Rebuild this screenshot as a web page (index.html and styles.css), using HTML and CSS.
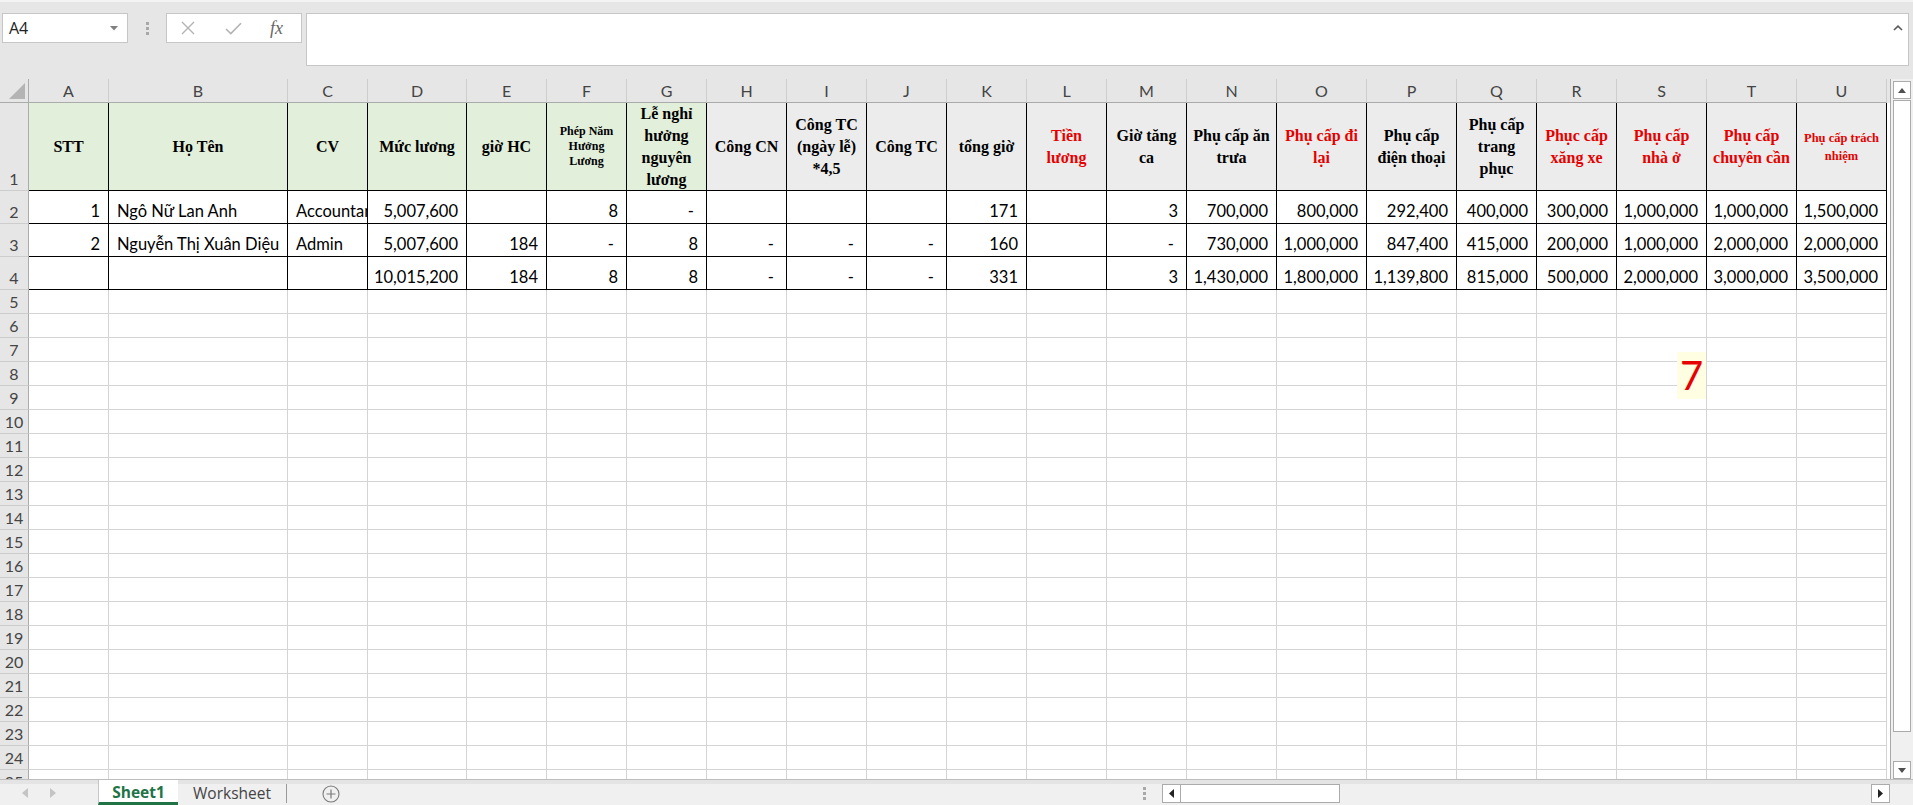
FILE: index.html
```html
<!DOCTYPE html>
<html lang="vi">
<head>
<meta charset="utf-8">
<title>Sheet1</title>
<link rel="stylesheet" href="styles.css">
</head>
<body>
<div class="app">
  <div class="fbar">
    <div class="namebox"><span>A4</span>
      <svg width="8" height="5" viewBox="0 0 8 5"><path d="M0 0H8L4 4.5Z" fill="#808080"/></svg>
    </div>
    <div class="dots"><i></i><i></i><i></i></div>
    <div class="fbtns">
      <svg class="ic-x" width="14" height="14" viewBox="0 0 14 14"><path d="M1 1L13 13M13 1L1 13" stroke="#b3b3b3" stroke-width="1.4" fill="none"/></svg>
      <svg class="ic-ok" width="17" height="13" viewBox="0 0 17 13"><path d="M1 7L5.8 11.6L16 1.2" stroke="#b3b3b3" stroke-width="1.6" fill="none"/></svg>
      <span class="fx">fx</span>
    </div>
    <div class="finput">
      <svg width="10" height="6" viewBox="0 0 10 6"><path d="M1 5L5 1.2L9 5" stroke="#5a5a5a" stroke-width="1.6" fill="none"/></svg>
    </div>
  </div>

  <div class="main">
    <div class="sheet">
      <div class="grid">
        <div class="ch corner"><span class="selall"></span></div>
        <div class="ch">A</div><div class="ch">B</div><div class="ch">C</div><div class="ch">D</div><div class="ch">E</div><div class="ch">F</div><div class="ch">G</div><div class="ch">H</div><div class="ch">I</div><div class="ch">J</div><div class="ch">K</div><div class="ch">L</div><div class="ch">M</div><div class="ch">N</div><div class="ch">O</div><div class="ch">P</div><div class="ch">Q</div><div class="ch">R</div><div class="ch">S</div><div class="ch">T</div><div class="ch">U</div>

        <div class="rh">1</div>
        <div class="c h g"><span>STT</span></div>
        <div class="c h g"><span>Họ Tên</span></div>
        <div class="c h g"><span>CV</span></div>
        <div class="c h g"><span>Mức lương</span></div>
        <div class="c h g"><span>giờ HC</span></div>
        <div class="c h g sm"><span>Phép Năm Hưởng Lương</span></div>
        <div class="c h g"><span>Lễ nghỉ hưởng nguyên lương</span></div>
        <div class="c h"><span>Công CN</span></div>
        <div class="c h"><span>Công TC (ngày lễ) *4,5</span></div>
        <div class="c h"><span>Công TC</span></div>
        <div class="c h"><span>tổng giờ</span></div>
        <div class="c h red"><span>Tiền lương</span></div>
        <div class="c h"><span>Giờ tăng ca</span></div>
        <div class="c h"><span>Phụ cấp ăn trưa</span></div>
        <div class="c h red"><span>Phụ cấp đi lại</span></div>
        <div class="c h"><span>Phụ cấp điện thoại</span></div>
        <div class="c h"><span>Phụ cấp trang phục</span></div>
        <div class="c h red"><span>Phục cấp xăng xe</span></div>
        <div class="c h red"><span>Phụ cấp nhà ở</span></div>
        <div class="c h red"><span>Phụ cấp chuyên cần</span></div>
        <div class="c h red xs"><span>Phụ cấp trách nhiệm</span></div>

        <div class="rh">2</div>
        <div class="c n">1</div>
        <div class="c t">Ngô Nữ Lan Anh</div>
        <div class="c t">Accountant</div>
        <div class="c n">5,007,600</div>
        <div class="c"></div>
        <div class="c n">8</div>
        <div class="c d">-</div>
        <div class="c"></div>
        <div class="c"></div>
        <div class="c"></div>
        <div class="c n">171</div>
        <div class="c"></div>
        <div class="c n">3</div>
        <div class="c n">700,000</div>
        <div class="c n">800,000</div>
        <div class="c n">292,400</div>
        <div class="c n">400,000</div>
        <div class="c n">300,000</div>
        <div class="c n">1,000,000</div>
        <div class="c n">1,000,000</div>
        <div class="c n">1,500,000</div>

        <div class="rh">3</div>
        <div class="c n">2</div>
        <div class="c t">Nguyễn Thị Xuân Diệu</div>
        <div class="c t">Admin</div>
        <div class="c n">5,007,600</div>
        <div class="c n">184</div>
        <div class="c d">-</div>
        <div class="c n">8</div>
        <div class="c d">-</div>
        <div class="c d">-</div>
        <div class="c d">-</div>
        <div class="c n">160</div>
        <div class="c"></div>
        <div class="c d">-</div>
        <div class="c n">730,000</div>
        <div class="c n">1,000,000</div>
        <div class="c n">847,400</div>
        <div class="c n">415,000</div>
        <div class="c n">200,000</div>
        <div class="c n">1,000,000</div>
        <div class="c n">2,000,000</div>
        <div class="c n">2,000,000</div>

        <div class="rh">4</div>
        <div class="c"></div>
        <div class="c"></div>
        <div class="c"></div>
        <div class="c n">10,015,200</div>
        <div class="c n">184</div>
        <div class="c n">8</div>
        <div class="c n">8</div>
        <div class="c d">-</div>
        <div class="c d">-</div>
        <div class="c d">-</div>
        <div class="c n">331</div>
        <div class="c"></div>
        <div class="c n">3</div>
        <div class="c n">1,430,000</div>
        <div class="c n">1,800,000</div>
        <div class="c n">1,139,800</div>
        <div class="c n">815,000</div>
        <div class="c n">500,000</div>
        <div class="c n">2,000,000</div>
        <div class="c n">3,000,000</div>
        <div class="c n">3,500,000</div>
      </div>

      <div class="lower">
        <div class="rhcol">
          <div class="rh">5</div><div class="rh">6</div><div class="rh">7</div><div class="rh">8</div><div class="rh">9</div>
          <div class="rh">10</div><div class="rh">11</div><div class="rh">12</div><div class="rh">13</div><div class="rh">14</div>
          <div class="rh">15</div><div class="rh">16</div><div class="rh">17</div><div class="rh">18</div><div class="rh">19</div>
          <div class="rh">20</div><div class="rh">21</div><div class="rh">22</div><div class="rh">23</div><div class="rh">24</div>
          <div class="rh">25</div>
        </div>
        <div class="strip"></div><div class="strip"></div><div class="strip"></div><div class="strip"></div><div class="strip"></div><div class="strip"></div><div class="strip"></div>
        <div class="strip"></div><div class="strip"></div><div class="strip"></div><div class="strip"></div><div class="strip"></div><div class="strip"></div><div class="strip"></div>
        <div class="strip"></div><div class="strip"></div><div class="strip"></div><div class="strip"></div><div class="strip"></div><div class="strip"></div><div class="strip"></div>
      </div>
    </div>

    <div class="vscroll">
      <div class="sbtn"><svg width="8" height="5" viewBox="0 0 8 5"><path d="M0 5H8L4 0Z" fill="#505050"/></svg></div>
      <div class="vthumb"></div>
      <div class="grow"></div>
      <div class="sbtn"><svg width="8" height="5" viewBox="0 0 8 5"><path d="M0 0H8L4 5Z" fill="#505050"/></svg></div>
    </div>
  </div>

  <div class="bottom">
    <div class="nav">
      <svg width="6" height="10" viewBox="0 0 6 10"><path d="M6 0V10L0 5Z" fill="#c4c4c4"/></svg>
      <svg width="6" height="10" viewBox="0 0 6 10"><path d="M0 0V10L6 5Z" fill="#c4c4c4"/></svg>
    </div>
    <div class="tab active">Sheet1</div>
    <div class="tab">Worksheet</div>
    <div class="tabsep"></div>
    <div class="addsheet">
      <svg width="18" height="18" viewBox="0 0 18 18"><circle cx="9" cy="9" r="8" fill="none" stroke="#7a7a7a" stroke-width="1.1"/><path d="M9 4.5V13.5M4.5 9H13.5" stroke="#7a7a7a" stroke-width="1.2"/></svg>
    </div>
    <div class="grow"></div>
    <div class="hdots"><i></i><i></i><i></i></div>
    <div class="hscroll">
      <div class="hbtn"><svg width="5" height="9" viewBox="0 0 5 9"><path d="M5 0V9L0 4.5Z" fill="#222"/></svg></div>
      <div class="hthumb"></div>
      <div class="grow"></div>
      <div class="hbtn"><svg width="5" height="9" viewBox="0 0 5 9"><path d="M0 0V9L5 4.5Z" fill="#222"/></svg></div>
    </div>
  </div>

  <div class="note">7</div>
</div>
</body>
</html>
```
FILE: styles.css
```css
* { box-sizing: border-box; margin: 0; padding: 0; }
html, body { width: 1913px; height: 805px; overflow: hidden; }
body { background: #e6e6e6; font-family: "Lato", "Liberation Sans", sans-serif; color: #000; }

.app {
  --cols: 29px 80px 179px 80px 99px 80px 80px 80px 80px 80px 80px 80px 80px 80px 90px 90px 90px 80px 80px 90px 90px 90px;
  width: 1913px; height: 805px;
  display: flex; flex-direction: column;
  position: relative;
}

/* formula bar */
.fbar {
  height: 79px; flex: 0 0 79px;
  display: flex; align-items: flex-start;
  padding-top: 13px;
  box-shadow: inset 0 2px 0 #f3f3f3;
}
.namebox {
  margin-left: 2px; width: 126px; height: 30px;
  background: #fff; border: 1px solid #c6c6c6;
  display: flex; align-items: center; justify-content: space-between;
  padding: 0 9px 0 6px;
  font: 16px "Open Sans", sans-serif; color: #222;
}
.dots {
  width: 38px; height: 30px;
  display: flex; flex-direction: column; align-items: center; justify-content: center; gap: 2px;
}
.dots i, .hdots i { display: block; width: 3px; height: 3px; background: #a8a8a8; }
.fbtns {
  width: 136px; height: 30px;
  background: #fff; border: 1px solid #c6c6c6;
  display: flex; align-items: center;
}
.ic-x { margin-left: 14px; }
.ic-ok { margin-left: 30px; }
.fx {
  margin-left: 28px;
  font: italic 18px "Liberation Serif", serif; color: #666;
  line-height: 20px;
}
.finput {
  margin-left: 4px; width: 1603px; height: 53px;
  background: #fff; border: 1px solid #c6c6c6;
  display: flex; justify-content: flex-end; align-items: flex-start;
  padding: 11px 5px 0 0;
}

/* sheet */
.main { height: 700px; flex: 0 0 700px; display: flex; }
.sheet {
  width: 1891px; height: 700px; overflow: hidden;
  background: linear-gradient(#e6e6e6 0 24px, #fff 24px);
  border-right: 1px solid #a8a8a8;
}
.grid {
  display: grid;
  grid-template-columns: var(--cols);
  grid-template-rows: 24px 88px 33px 33px 33px;
}
.ch {
  background: #e6e6e6;
  border-right: 1px solid #cdcdcd; border-bottom: 1px solid #ababab;
  display: flex; align-items: center; justify-content: center;
  font-size: 16px; line-height: 20px; color: #444;
}
.corner {
  justify-content: flex-end; align-items: flex-end;
  padding: 0 3px 3px 0;
  border-right-color: #ababab;
}
.selall {
  display: block; width: 16px; height: 16px;
  background: #b4b4b4;
  clip-path: polygon(100% 0, 100% 100%, 0 100%);
}
.rh {
  background: #e6e6e6;
  border-right: 1px solid #ababab; border-bottom: 1px solid #cdcdcd;
  display: flex; align-items: flex-end; justify-content: center;
  padding-bottom: 1px;
  font-size: 16px; line-height: 20px; color: #444;
}

.c {
  border-right: 1px solid #000; border-bottom: 1px solid #000;
  display: flex; align-items: flex-end;
  overflow: hidden; white-space: nowrap;
  font-size: 16.5px; line-height: 20px;
  padding-bottom: 2px;
  background: #fff;
}
.n { justify-content: flex-end; padding-right: 8px; }
.d { justify-content: flex-end; padding-right: 12px; }
.t { padding-left: 8px; }

.h {
  background: #ececec;
  align-items: center; justify-content: center;
  white-space: normal; text-align: center;
  font-family: "Liberation Serif", serif; font-weight: bold;
  font-size: 16px; line-height: 22px;
  padding: 0 4px;
}
.h.g { background: #e2efda; }
.h.red { color: #e60000; }
.h.sm { font-size: 12px; line-height: 15px; }
.h.xs { font-size: 12.5px; line-height: 18px; }

.lower {
  display: grid;
  grid-template-columns: var(--cols);
  height: 489px;
}
.rhcol { display: flex; flex-direction: column; }
.rhcol .rh { flex: 0 0 24px; }
.strip {
  border-right: 1px solid #d4d4d4;
  background: repeating-linear-gradient(to bottom, #fff 0 23px, #d4d4d4 23px 24px);
}

/* vertical scrollbar */
.vscroll {
  width: 22px; background: #f0f0f0;
  display: flex; flex-direction: column; align-items: center;
  padding-top: 2px;
}
.sbtn {
  width: 18px; height: 18px; flex: 0 0 18px;
  background: #fff; border: 1px solid #ababab;
  display: flex; align-items: center; justify-content: center;
}
.vthumb {
  width: 18px; height: 632px; flex: 0 0 632px;
  margin-top: 1px;
  background: #fff; border: 1px solid #ababab;
}
.grow { flex: 1 1 auto; }

/* bottom bar */
.bottom {
  height: 26px; flex: 0 0 26px;
  display: flex; align-items: stretch;
  background: linear-gradient(#e4e4e4 0 4px, #f0f0f0 4px);
  border-top: 1px solid #bdbdbd;
  font-family: "Open Sans", sans-serif;
}
.nav {
  width: 98px;
  display: flex; align-items: center;
  padding-left: 22px; gap: 22px;
}
.tab {
  display: flex; align-items: center; justify-content: center;
  font-size: 15.5px; color: #444;
}
.tab.active {
  width: 80px; background: #fff;
  border-left: 1px solid #c6c6c6;
  border-bottom: 3px solid #217346;
  color: #217346; font-weight: bold;
  padding-top: 2px;
}
.tab:not(.active) { width: 108px; padding-top: 1px; }
.tabsep { width: 1px; background: #9a9a9a; margin: 4px 0 2px; }
.addsheet {
  display: flex; align-items: center;
  padding-left: 35px; padding-top: 2px;
}
.hdots {
  display: flex; flex-direction: column; justify-content: center; gap: 2px;
  padding-top: 2px;
  margin-right: 16px;
}
.hscroll {
  width: 751px;
  display: flex; align-items: center;
  padding-top: 2px; padding-right: 23px;
}
.hbtn {
  width: 19px; height: 19px;
  background: #fff; border: 1px solid #ababab;
  display: flex; align-items: center; justify-content: center;
}
.hthumb {
  width: 159px; height: 19px;
  background: #fff; border: 1px solid #ababab; border-left: 0;
}

/* floating note over the grid */
.note {
  position: absolute; left: 1677px; top: 352px;
  width: 29px; height: 47px;
  background: #fffde2;
  color: #e60000;
  font: 40px/47px "Lato", sans-serif;
  text-align: center;
}
```
